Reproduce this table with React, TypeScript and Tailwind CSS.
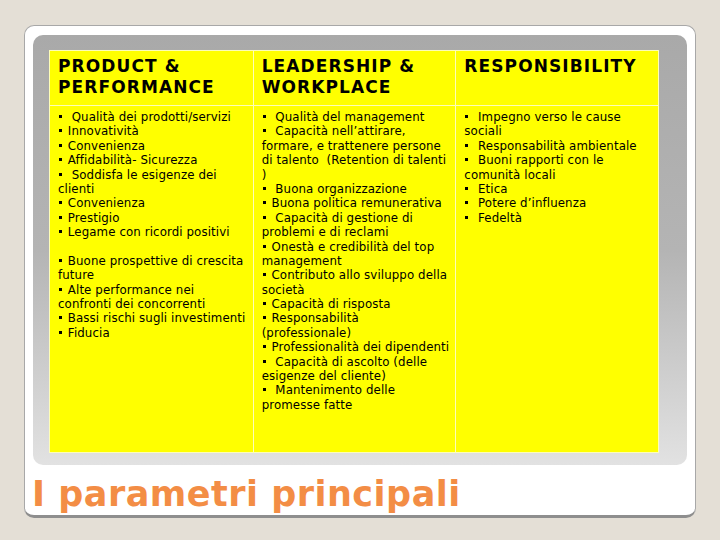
const columns: { title: string[]; lines: string[] }[] = [
  {
    title: ["PRODUCT &", "PERFORMANCE"],
    lines: [
      "▪  Qualità dei prodotti/servizi",
      "▪ Innovatività",
      "▪ Convenienza",
      "▪ Affidabilità- Sicurezza",
      "▪  Soddisfa le esigenze dei",
      "clienti",
      "▪ Convenienza",
      "▪ Prestigio",
      "▪ Legame con ricordi positivi",
      "",
      "▪ Buone prospettive di crescita",
      "future",
      "▪ Alte performance nei",
      "confronti dei concorrenti",
      "▪ Bassi rischi sugli investimenti",
      "▪ Fiducia",
    ],
  },
  {
    title: ["LEADERSHIP &", "WORKPLACE"],
    lines: [
      "▪  Qualità del management",
      "▪  Capacità nell’attirare,",
      "formare, e trattenere persone",
      "di talento  (Retention di talenti",
      ")",
      "▪  Buona organizzazione",
      "▪ Buona politica remunerativa",
      "▪  Capacità di gestione di",
      "problemi e di reclami",
      "▪ Onestà e credibilità del top",
      "management",
      "▪ Contributo allo sviluppo della",
      "società",
      "▪ Capacità di risposta",
      "▪ Responsabilità",
      "(professionale)",
      "▪ Professionalità dei dipendenti",
      "▪  Capacità di ascolto (delle",
      "esigenze del cliente)",
      "▪  Mantenimento delle",
      "promesse fatte",
    ],
  },
  {
    title: ["RESPONSIBILITY"],
    lines: [
      "▪  Impegno verso le cause",
      "sociali",
      "▪  Responsabilità ambientale",
      "▪  Buoni rapporti con le",
      "comunità locali",
      "▪  Etica",
      "▪  Potere d’influenza",
      "▪  Fedeltà",
    ],
  },
]

function Line({ text }: { text: string }) {
  if (!text.startsWith("▪")) {
    return <div className="whitespace-pre h-[14.4px]">{text}</div>
  }
  return (
    <div className="whitespace-pre h-[14.4px]">
      <span className="inline-block w-[3px] h-[3px] bg-black align-middle mr-[2px] ml-[1px] relative -top-[1px]" />
      {text.slice(1)}
    </div>
  )
}

export default function App() {
  return (
    <div className="w-[720px] h-[540px] bg-[#e4dfd6] pt-[25px] pl-[24px] font-['DejaVu_Sans',sans-serif] overflow-hidden">
      <div className="w-[672px] h-[493px] bg-white border border-[#a8a8a8] border-b-[3px] border-b-[#8e8e8e] rounded-[10px] pt-[9px] pl-[8px]">
        <div className="w-[654px] h-[430px] rounded-[10px] bg-gradient-to-b from-[#a9a9a9] via-[#b4b4b4] to-[#e2e2e2] pt-[15px] pl-[16px]">
          <div className="w-[610px] h-[403px] bg-[#ffff00] border border-[#fdfdb8] grid grid-cols-3 grid-rows-[55px_1fr]">
            {columns.map((col, i) => (
              <div
                key={"h" + i}
                className={`px-[8px] pt-[5px] border-b border-[#fdfdb8] ${i > 0 ? "border-l" : ""} text-[17px] leading-[21px] tracking-[1.1px] font-bold text-black`}
              >
                {col.title.map((t) => (
                  <div key={t}>{t}</div>
                ))}
              </div>
            ))}
            {columns.map((col, i) => (
              <div
                key={"b" + i}
                className={`px-[8px] pt-[4px] ${i > 0 ? "border-l border-[#fdfdb8]" : ""} text-[11.8px] leading-[14.4px] tracking-[0.1px] text-black`}
              >
                {col.lines.map((l, j) => (
                  <Line key={j} text={l} />
                ))}
              </div>
            ))}
          </div>
        </div>
        <div className="pt-[8px] text-[35px] leading-[42px] tracking-[0.5px] font-bold text-[#f38d45] whitespace-nowrap -ml-[1px]">
          I parametri principali
        </div>
      </div>
    </div>
  )
}
